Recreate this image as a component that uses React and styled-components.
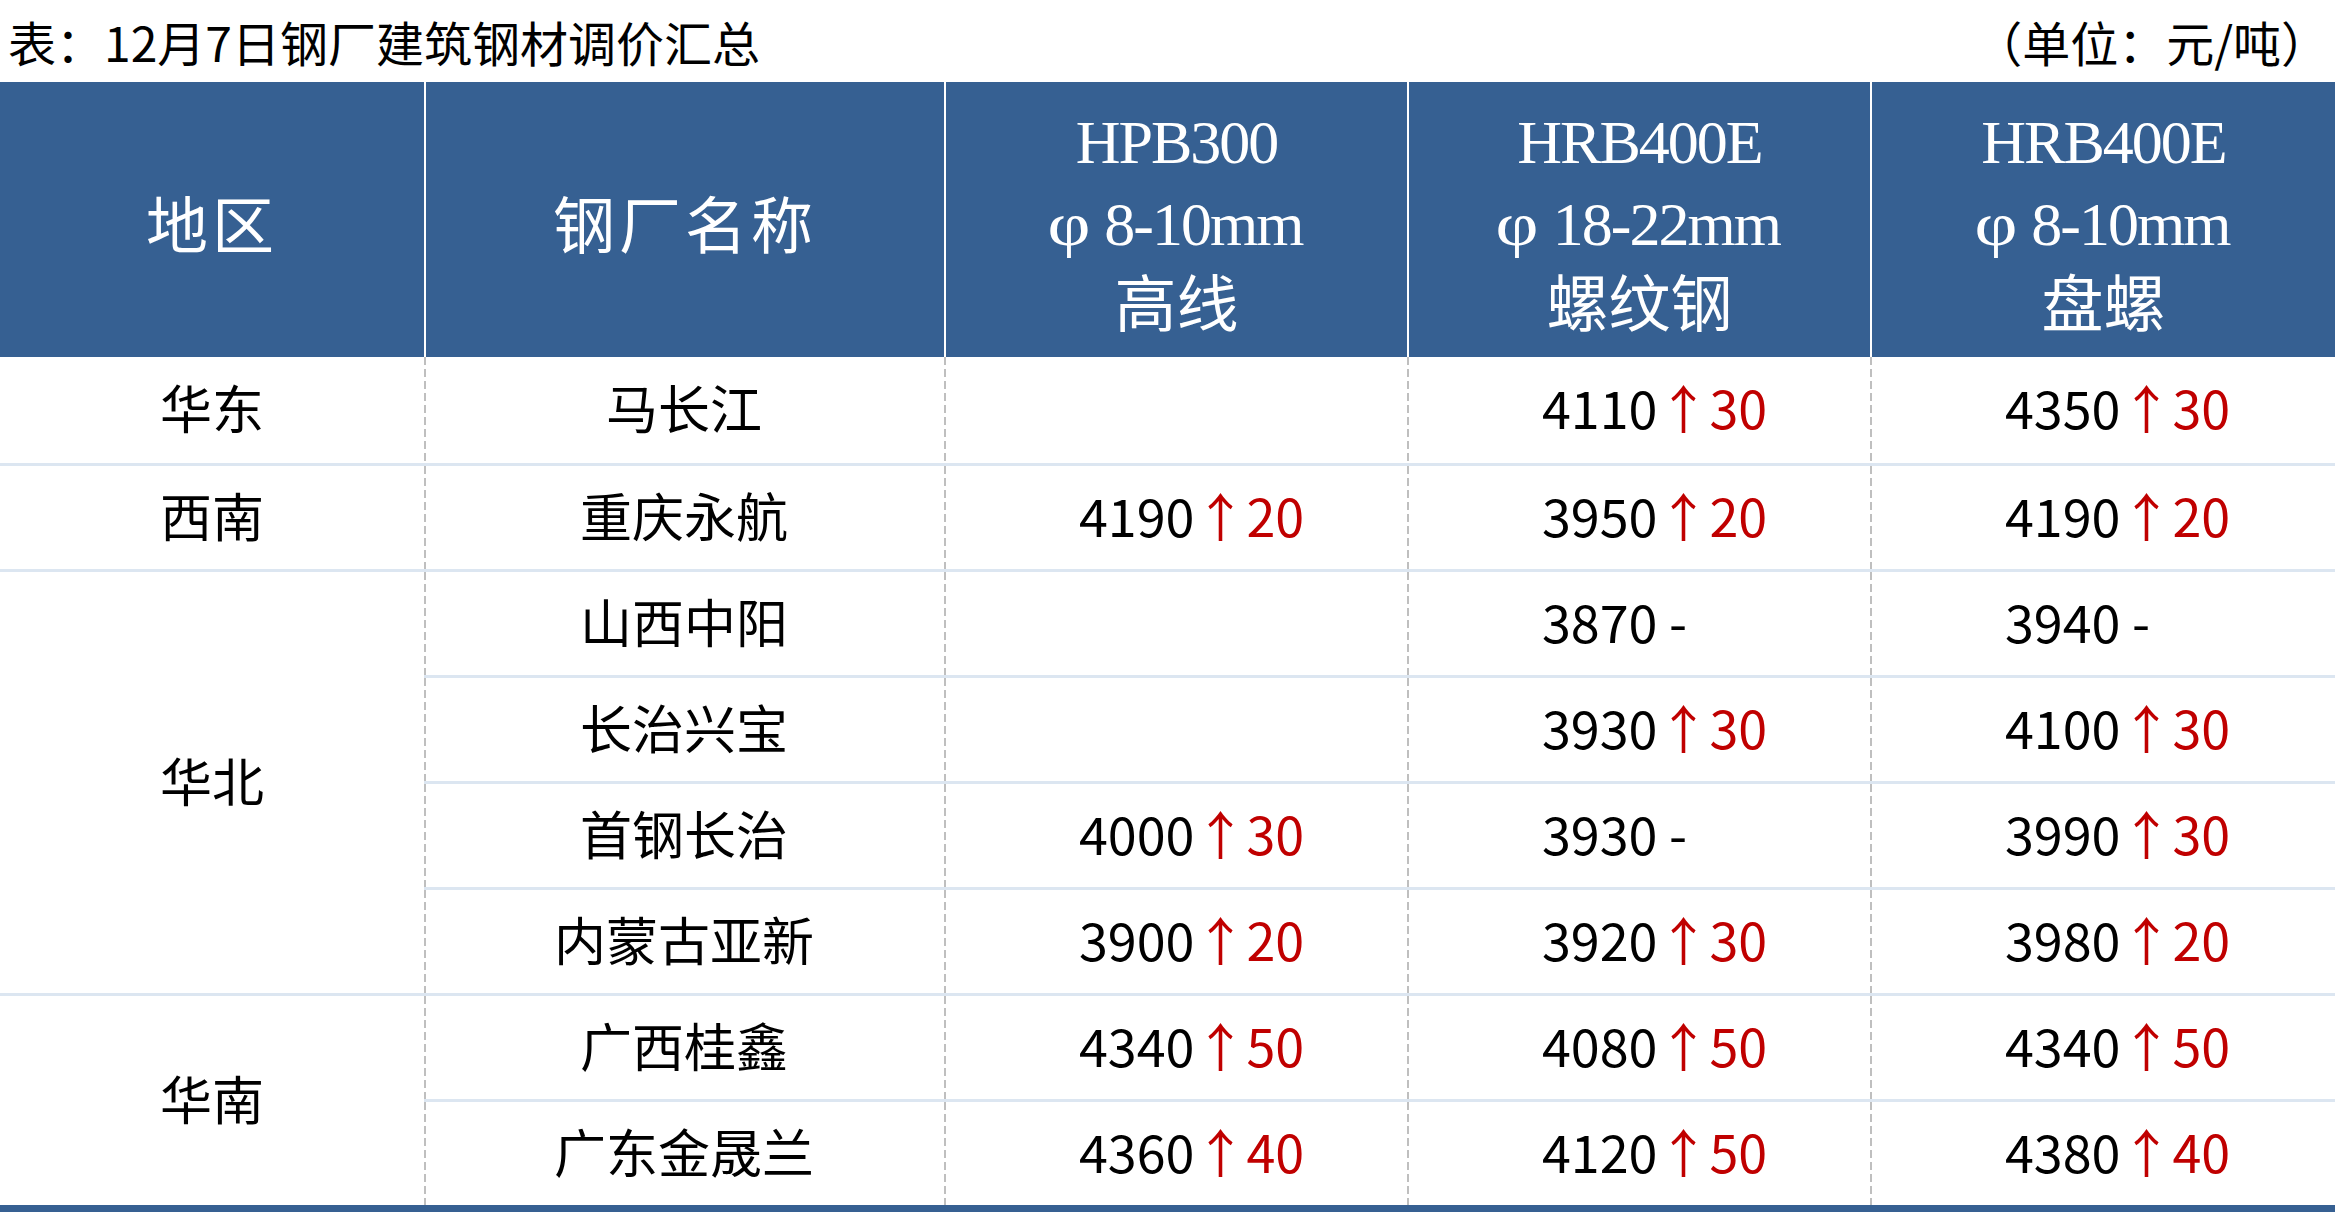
import React from "react";
import styled, { createGlobalStyle } from "styled-components";

const GlobalStyle = createGlobalStyle`
  html, body {
    margin: 0;
    padding: 0;
    background: #ffffff;
  }
  body {
    font-family: "Noto Sans CJK SC", "Noto Sans", sans-serif;
  }
`;

const BLUE = "#366092";

const Page = styled.div`
  width: 2335px;
  height: 1212px;
  overflow: hidden;
  background: #ffffff;
`;

const TitleBar = styled.div`
  height: 82px;
  display: flex;
  align-items: center;
  justify-content: space-between;
  padding: 0 6px 0 8px;
  font-size: 48px;
  color: #000;
  box-sizing: border-box;
`;

const Caption = styled.span`
  line-height: 1;
`;

const Table = styled.div`
  display: grid;
  grid-template-columns: 424px 520px 463px 463px 465px;
  grid-template-rows: 275px repeat(8, 106px);
`;

const HeadCell = styled.div`
  background: ${BLUE};
  color: #ffffff;
  display: flex;
  flex-direction: column;
  align-items: center;
  justify-content: center;
  font-family: "Liberation Serif", "Noto Sans CJK SC", serif;
  font-size: 62px;
  line-height: 82px;
  border-left: ${(p) => (p.$first ? "none" : "2px solid #ffffff")};
  padding-top: ${(p) => (p.$single ? "16px" : "8px")};
  box-sizing: border-box;
`;

const HeadLine = styled.span`
  white-space: pre;
  letter-spacing: ${(p) => (p.$latin ? "-2px" : p.$spaced ? "4px" : "0")};
`;

const Phi = styled.span`
  display: inline-block;
  transform: scaleX(1.2);
  margin-right: 20px;
`;

const Cell = styled.div`
  display: flex;
  align-items: center;
  justify-content: ${(p) => (p.$left ? "flex-start" : "center")};
  padding-left: ${(p) => (p.$left ? "135px" : "0")};
  padding-bottom: 7px;
  box-sizing: border-box;
  font-size: 52px;
  color: #000;
  white-space: pre;
  grid-row: ${(p) => (p.$span ? `span ${p.$span}` : "auto")};
  border-top: ${(p) => (p.$first ? "none" : "3px solid #dce6f1")};
  background: ${(p) =>
    p.$dashed
      ? "repeating-linear-gradient(to bottom, #bfbfbf 0 8px, transparent 8px 12px) left top / 2px 100% no-repeat"
      : "none"};
`;

const Up = styled.span`
  color: #c00000;
`;

const BottomBar = styled.div`
  height: 7px;
  background: ${BLUE};
`;

// size lines are drawn as φ + range
const heads = [
  { lines: ["地区"] },
  { lines: ["钢厂名称"] },
  { grade: "HPB300", size: "8-10mm", kind: "高线" },
  { grade: "HRB400E", size: "18-22mm", kind: "螺纹钢" },
  { grade: "HRB400E", size: "8-10mm", kind: "盘螺" },
];

const groups = [
  {
    region: "华东",
    items: [{ name: "马长江", v: [null, ["4110", "30"], ["4350", "30"]] }],
  },
  {
    region: "西南",
    items: [{ name: "重庆永航", v: [["4190", "20"], ["3950", "20"], ["4190", "20"]] }],
  },
  {
    region: "华北",
    items: [
      { name: "山西中阳", v: [null, ["3870", null], ["3940", null]] },
      { name: "长治兴宝", v: [null, ["3930", "30"], ["4100", "30"]] },
      { name: "首钢长治", v: [["4000", "30"], ["3930", null], ["3990", "30"]] },
      { name: "内蒙古亚新", v: [["3900", "20"], ["3920", "30"], ["3980", "20"]] },
    ],
  },
  {
    region: "华南",
    items: [
      { name: "广西桂鑫", v: [["4340", "50"], ["4080", "50"], ["4340", "50"]] },
      { name: "广东金晟兰", v: [["4360", "40"], ["4120", "50"], ["4380", "40"]] },
    ],
  },
];

function Price({ value }) {
  if (!value) return null;
  const [num, change] = value;
  if (!change) return <>{num} -</>;
  return (
    <>
      {num}
      <Up>↑{change}</Up>
    </>
  );
}

function Head({ h, first }) {
  if (h.lines) {
    return (
      <HeadCell $first={first} $single>
        <HeadLine $spaced>{h.lines[0]}</HeadLine>
      </HeadCell>
    );
  }
  return (
    <HeadCell>
      <HeadLine $latin>{h.grade}</HeadLine>
      <HeadLine $latin>
        <Phi>φ</Phi>
        {h.size}
      </HeadLine>
      <HeadLine>{h.kind}</HeadLine>
    </HeadCell>
  );
}

export default function App() {
  let rowIndex = 0;
  const cells = [];

  groups.forEach((g, gi) => {
    g.items.forEach((item, ii) => {
      const first = rowIndex === 0;
      if (ii === 0) {
        cells.push(
          <Cell key={`r${gi}`} $span={g.items.length} $first={first}>
            {g.region}
          </Cell>
        );
      }
      cells.push(
        <Cell key={`n${gi}-${ii}`} $first={first} $dashed>
          {item.name}
        </Cell>
      );
      item.v.forEach((val, vi) => {
        cells.push(
          <Cell key={`v${gi}-${ii}-${vi}`} $first={first} $dashed $left>
            <Price value={val} />
          </Cell>
        );
      });
      rowIndex += 1;
    });
  });

  return (
    <Page>
      <GlobalStyle />
      <TitleBar>
        <Caption>表：12月7日钢厂建筑钢材调价汇总</Caption>
        <Caption>（单位：元/吨）</Caption>
      </TitleBar>
      <Table>
        {heads.map((h, i) => (
          <Head key={i} h={h} first={i === 0} />
        ))}
        {cells}
      </Table>
      <BottomBar />
    </Page>
  );
}
